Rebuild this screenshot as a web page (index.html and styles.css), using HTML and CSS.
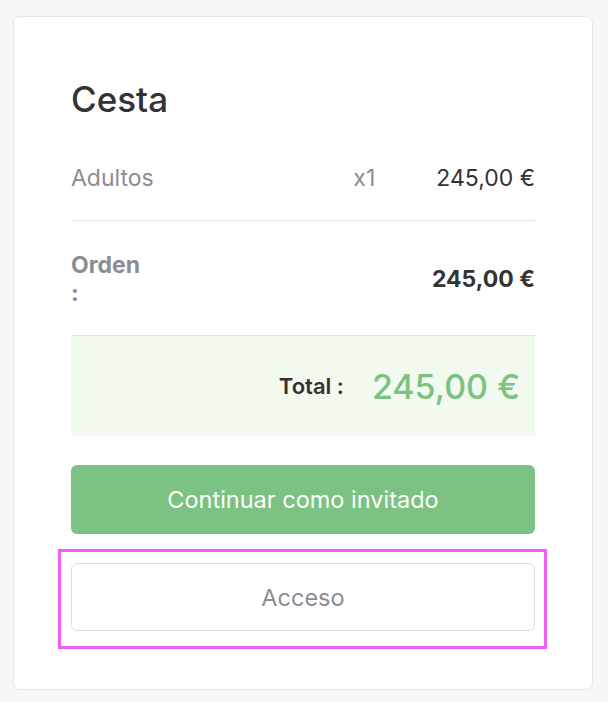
FILE: index.html
```html
<!DOCTYPE html>
<html lang="es">
<head>
<meta charset="utf-8">
<link rel="stylesheet" href="styles.css">
</head>
<body>
<div class="card">
  <h1 class="title">Cesta</h1>
  <div class="row item">
    <span class="label">Adultos</span>
    <span class="qty">x1</span>
    <span class="price">245,00 €</span>
  </div>
  <div class="row order">
    <span class="label bold narrow">Orden :</span>
    <span class="price bold">245,00 €</span>
  </div>
  <div class="total">
    <span class="total-label">Total :</span>
    <span class="total-price">245,00 €</span>
  </div>
  <button class="btn primary">Continuar como invitado</button>
  <div class="focus">
    <button class="btn secondary">Acceso</button>
  </div>
</div>
</body>
</html>
```
FILE: styles.css
```css
html, body {
  margin: 0;
  padding: 0;
  background: #f7f7f7;
  font-family: Inter, "Noto Sans", sans-serif;
}
body {
  padding: 16px 15px 0 13px;
}
.card {
  background: #fff;
  border: 1px solid #e6e7ea;
  border-radius: 7px;
  padding: 64px 57px 40px;
  box-sizing: border-box;
  height: 674px;
}
.title {
  margin: 0 0 19px;
  font-size: 35px;
  line-height: 36px;
  font-weight: 500;
  color: #333;
}
.row {
  display: flex;
  align-items: center;
  border-bottom: 1px solid #e3e4e8;
  font-size: 23px;
  line-height: 28px;
}
.item {
  padding: 28px 0;
}
.order {
  padding: 30px 0 28px;
}
.label {
  color: #8a8d93;
  flex: 1;
}
.qty {
  color: #8a8d93;
  margin-right: 61px;
}
.price {
  color: #333;
}
.bold {
  font-weight: 700;
}
.narrow {
  flex: 0 0 76px;
  margin-right: auto;
}
.total {
  height: 100px;
  background: #f2f9ef;
  display: flex;
  align-items: center;
  justify-content: flex-end;
  padding-right: 15px;
}
.total-label {
  font-size: 22px;
  font-weight: 600;
  color: #333;
  margin-right: 28px;
}
.total-price {
  font-size: 34px;
  color: #7bc283;
  font-weight: 500;
}
.btn {
  display: block;
  width: 100%;
  border-radius: 6px;
  font-family: inherit;
  font-size: 23.5px;
  cursor: pointer;
}
.primary {
  margin-top: 29px;
  height: 69px;
  background: #7bc283;
  color: #fff;
  border: none;
}
.focus {
  margin: 15px -12px 0 -13px;
  border: 3px solid #ef5ef5;
  padding: 11px 9px 15px 10px;
}
.secondary {
  height: 68px;
  background: #fff;
  color: #8a8d93;
  border: 1px solid #dcdde2;
}
```
